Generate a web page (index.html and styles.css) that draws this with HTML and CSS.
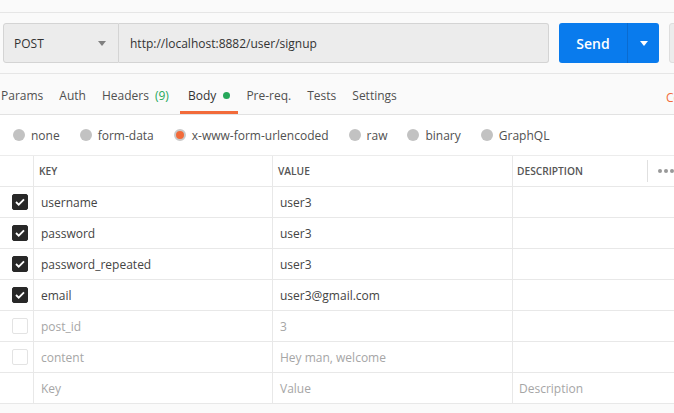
FILE: index.html
```html
<!DOCTYPE html>
<html>
<head>
<meta charset="utf-8">
<link rel="stylesheet" href="styles.css">
</head>
<body>
<div class="page">
  <div class="topbar"></div>
  <div class="reqbar">
    <div class="method">
      <span>POST</span>
      <svg class="caret" width="8" height="5" viewBox="0 0 8 5"><path d="M0 0h8L4 5z" fill="#808080"/></svg>
    </div>
    <div class="url">http://localhost:8882/user/signup</div>
    <div class="send">
      <span class="send-label">Send</span>
      <span class="send-drop"><svg width="8" height="5" viewBox="0 0 8 5"><path d="M0 0h8L4 5z" fill="#fff"/></svg></span>
    </div>
    <div class="save"></div>
  </div>
  <div class="tabs">
    <span class="tab first">Params</span>
    <span class="tab">Auth</span>
    <span class="tab">Headers <span class="count">(9)</span></span>
    <span class="tab active">Body <i class="dot"></i></span>
    <span class="tab">Pre-req.</span>
    <span class="tab">Tests</span>
    <span class="tab">Settings</span>
    <span class="cookies">Cookies</span>
  </div>
  <div class="radios">
    <span class="radio"><i class="circ"></i>none</span>
    <span class="radio"><i class="circ"></i>form-data</span>
    <span class="radio"><i class="circ on"></i>x-www-form-urlencoded</span>
    <span class="radio"><i class="circ"></i>raw</span>
    <span class="radio"><i class="circ"></i>binary</span>
    <span class="radio"><i class="circ"></i>GraphQL</span>
  </div>
  <div class="table">
    <div class="row head">
      <div class="c chk"></div>
      <div class="c key">KEY</div>
      <div class="c val">VALUE</div>
      <div class="c desc">DESCRIPTION<span class="more"><i></i><i></i><i></i></span></div>
    </div>
    <div class="row">
      <div class="c chk"><span class="box on"><svg width="10" height="8" viewBox="0 0 10 8"><path d="M1 4l2.7 2.7L9 1.3" fill="none" stroke="#fff" stroke-width="1.8"/></svg></span></div>
      <div class="c key">username</div>
      <div class="c val">user3</div>
      <div class="c desc"></div>
    </div>
    <div class="row">
      <div class="c chk"><span class="box on"><svg width="10" height="8" viewBox="0 0 10 8"><path d="M1 4l2.7 2.7L9 1.3" fill="none" stroke="#fff" stroke-width="1.8"/></svg></span></div>
      <div class="c key">password</div>
      <div class="c val">user3</div>
      <div class="c desc"></div>
    </div>
    <div class="row">
      <div class="c chk"><span class="box on"><svg width="10" height="8" viewBox="0 0 10 8"><path d="M1 4l2.7 2.7L9 1.3" fill="none" stroke="#fff" stroke-width="1.8"/></svg></span></div>
      <div class="c key">password_repeated</div>
      <div class="c val">user3</div>
      <div class="c desc"></div>
    </div>
    <div class="row">
      <div class="c chk"><span class="box on"><svg width="10" height="8" viewBox="0 0 10 8"><path d="M1 4l2.7 2.7L9 1.3" fill="none" stroke="#fff" stroke-width="1.8"/></svg></span></div>
      <div class="c key">email</div>
      <div class="c val">user3@gmail.com</div>
      <div class="c desc"></div>
    </div>
    <div class="row off">
      <div class="c chk"><span class="box"></span></div>
      <div class="c key">post_id</div>
      <div class="c val">3</div>
      <div class="c desc"></div>
    </div>
    <div class="row off">
      <div class="c chk"><span class="box"></span></div>
      <div class="c key">content</div>
      <div class="c val">Hey man, welcome</div>
      <div class="c desc"></div>
    </div>
    <div class="row off">
      <div class="c chk"></div>
      <div class="c key">Key</div>
      <div class="c val">Value</div>
      <div class="c desc">Description</div>
    </div>
  </div>
</div>
</body>
</html>
```
FILE: styles.css
```css
html, body {
  margin: 0;
  padding: 0;
  background: #fafafa;
  overflow: hidden;
}
body {
  font-family: "Open Sans", "Noto Sans", sans-serif;
  color: #505050;
  width: 674px;
  height: 413px;
}
.page {
  width: 760px;
}
.topbar {
  height: 12px;
  border-bottom: 1px solid #e6e6e6;
  background: #fafafa;
}
.reqbar {
  display: flex;
  align-items: stretch;
  height: 40px;
  padding: 10px 0 10px 3px;
  background: #fafafa;
}
.method {
  box-sizing: border-box;
  width: 116px;
  display: flex;
  align-items: center;
  justify-content: space-between;
  padding: 0 12px 0 10px;
  background: #ececec;
  border: 1px solid #d4d4d4;
  border-radius: 3px 0 0 3px;
  font-size: 12px;
  color: #333;
}
.caret { margin-top: 1px; }
.url {
  box-sizing: border-box;
  width: 430px;
  display: flex;
  align-items: center;
  padding-left: 11px;
  background: #ececec;
  border: 1px solid #d4d4d4;
  border-left: none;
  border-radius: 0 3px 3px 0;
  font-size: 12px;
  color: #333;
}
.send {
  margin-left: 10px;
  width: 100px;
  display: flex;
  background: #097bed;
  border-radius: 3px;
  color: #fff;
}
.send-label {
  width: 68px;
  display: flex;
  align-items: center;
  justify-content: center;
  font-size: 14px;
  font-weight: 600;
  border-right: 1px solid #0a6bd0;
}
.send-drop {
  flex: 1;
  display: flex;
  align-items: center;
  justify-content: center;
}
.save {
  margin-left: 10px;
  width: 80px;
  background: #ececec;
  border: 1px solid #dedede;
  border-radius: 3px;
}
.tabs {
  height: 40px;
  display: flex;
  align-items: stretch;
  border-top: 1px solid #e6e6e6;
  border-bottom: 1px solid #e2e2e2;
  background: #fafafa;
  font-size: 12px;
  position: relative;
}
.tab {
  display: flex;
  align-items: center;
  padding: 6px 8px 0 8px;
  border-bottom: 3px solid transparent;
  white-space: pre;
}
.tab.first { margin-left: -7px; }
.tab.active { border-bottom-color: #f26b3a; color: #333; margin-left: 3px; }
.count { color: #26a85a; margin-left: 3px; }
.dot {
  display: inline-block;
  width: 7px;
  height: 7px;
  border-radius: 50%;
  background: #26a85a;
  margin-left: 4px;
}
.cookies {
  position: absolute;
  left: 666px;
  top: 15px;
  color: #f26b3a;
}
.radios {
  height: 40px;
  display: flex;
  align-items: center;
  background: #fff;
  font-size: 12px;
  padding-left: 13px;
}
.radio {
  display: flex;
  align-items: center;
  margin-right: 20px;
}
.circ {
  display: inline-block;
  width: 12px;
  height: 12px;
  border-radius: 50%;
  background: #c2c2c2;
  margin-right: 6px;
  box-sizing: border-box;
}
.circ.on {
  background: #f26b3a;
  border: 2px solid #c9c9c9;
}
.table {
  background: #fff;
  border-top: 1px solid #ececec;
}
.row {
  display: flex;
  height: 30px;
  border-bottom: 1px solid #e8e8e8;
  font-size: 12px;
  color: #444;
}
.row.head {
  font-size: 10.2px;
  font-weight: 600;
  color: #555;
}
.row.off { color: #a6a6a6; }
.c {
  display: flex;
  align-items: center;
  box-sizing: border-box;
  border-right: 1px solid #e8e8e8;
}
.c.chk { width: 34px; justify-content: flex-start; padding-left: 12px; }
.c.key { width: 239px; padding-left: 7px; }
.head .c.key { padding-left: 5px; }
.c.val { width: 240px; padding-left: 7px; }
.head .c.val { padding-left: 5px; }
.c.desc { width: 240px; padding-left: 6px; border-right: none; position: relative; }
.head .c.desc { padding-left: 4px; }
.box {
  box-sizing: border-box;
  display: inline-flex;
  align-items: center;
  justify-content: center;
  width: 16px;
  height: 16px;
  border-radius: 2px;
  border: 1px solid #e3e3e3;
  background: #fff;
}
.box.on {
  background: #282828;
  border-color: #282828;
}
.more {
  position: absolute;
  left: 134px;
  top: 4px;
  height: 22px;
  border-left: 1px solid #e0e0e0;
  display: flex;
  align-items: center;
  gap: 2px;
  padding-left: 10px;
}
.more i {
  display: inline-block;
  width: 4px;
  height: 4px;
  border-radius: 50%;
  background: #999;
}
```
